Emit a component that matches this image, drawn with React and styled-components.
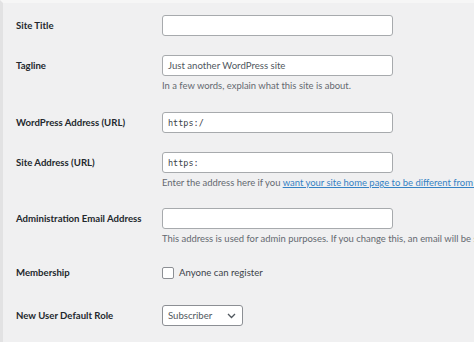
import React from 'react';
import styled, { createGlobalStyle } from 'styled-components';

const Global = createGlobalStyle`
  html, body {
    margin: 0;
    padding: 0;
    background: #f0f0f1;
  }
  body {
    font-family: Lato, "Noto Sans", sans-serif;
    overflow: hidden;
  }
`;

const Page = styled.div`
  width: 474px;
  height: 342px;
  box-sizing: border-box;
  border-left: 3px solid #e2e2e3;
  border-top: 3px solid #f6f6f6;
  padding: 12px 0 0 13px;
  overflow: hidden;
`;

const Row = styled.div`
  display: grid;
  grid-template-columns: 146px 1fr;
  margin-bottom: ${(p) => p.$gap ?? 19}px;
`;

const Label = styled.div`
  font-size: 9.6px;
  font-weight: 700;
  color: #23282d;
  line-height: 21px;
  white-space: nowrap;
`;

const Field = styled.div`
  display: flex;
  flex-direction: column;
  min-width: 0;
`;

const Input = styled.div`
  width: 231px;
  height: 21px;
  box-sizing: border-box;
  background: #fff;
  border: 1px solid #a7aaad;
  border-radius: 3px;
  padding: 0 5px;
  display: flex;
  align-items: center;
  font-size: 9.6px;
  color: #50575e;
  ${(p) =>
    p.$mono &&
    'font-family: "DejaVu Sans Mono", "Liberation Mono", monospace; font-size: 8.5px; color: #3c434a;'}
`;

const Help = styled.div`
  margin-top: 3px;
  font-size: 9.45px;
  line-height: 14px;
  color: #646970;
  white-space: nowrap;
`;

const Link = styled.a`
  color: #3582c4;
  text-decoration: underline;
`;

const CheckLine = styled.label`
  display: flex;
  align-items: center;
  gap: 5px;
  height: 21px;
  font-size: 9.6px;
  color: #3c434a;
`;

const Box = styled.span`
  width: 10px;
  height: 10px;
  border: 1px solid #8c8f94;
  border-radius: 2px;
  background: #fff;
`;

const Select = styled.div`
  width: 81px;
  height: 21px;
  box-sizing: border-box;
  background: #fff;
  border: 1px solid #8c8f94;
  border-radius: 3px;
  padding: 0 6px 0 5px;
  display: flex;
  align-items: center;
  justify-content: space-between;
  font-size: 9.6px;
  color: #50575e;
`;

export default function App() {
  return (
    <Page>
      <Global />
      <Row>
        <Label>Site Title</Label>
        <Field>
          <Input />
        </Field>
      </Row>
      <Row>
        <Label>Tagline</Label>
        <Field>
          <Input>Just another WordPress site</Input>
          <Help>In a few words, explain what this site is about.</Help>
        </Field>
      </Row>
      <Row>
        <Label>WordPress Address (URL)</Label>
        <Field>
          <Input $mono>https:/</Input>
        </Field>
      </Row>
      <Row $gap={18}>
        <Label>Site Address (URL)</Label>
        <Field>
          <Input $mono>https:</Input>
          <Help>
            Enter the address here if you <Link>want your site home page to be different from your</Link>
          </Help>
        </Field>
      </Row>
      <Row $gap={16}>
        <Label>Administration Email Address</Label>
        <Field>
          <Input />
          <Help>This address is used for admin purposes. If you change this, an email will be sent</Help>
        </Field>
      </Row>
      <Row $gap={22}>
        <Label>Membership</Label>
        <Field>
          <CheckLine>
            <Box />
            Anyone can register
          </CheckLine>
        </Field>
      </Row>
      <Row>
        <Label>New User Default Role</Label>
        <Field>
          <Select>
            Subscriber
            <svg width="9" height="6" viewBox="0 0 9 6">
              <path d="M1 1l3.5 3.5L8 1" fill="none" stroke="#50575e" strokeWidth="1.3" />
            </svg>
          </Select>
        </Field>
      </Row>
    </Page>
  );
}
